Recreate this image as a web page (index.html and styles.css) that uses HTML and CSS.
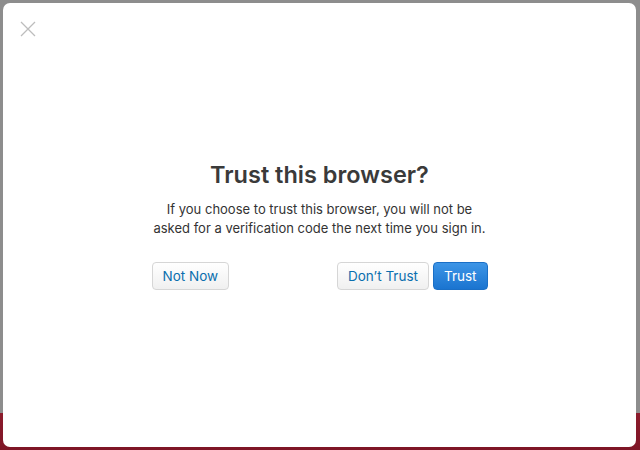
FILE: index.html
```html
<!DOCTYPE html>
<html lang="en">
<head>
<meta charset="utf-8">
<title>Trust this browser?</title>
<link rel="stylesheet" href="styles.css">
</head>
<body>
<div class="modal">
  <button class="close" aria-label="Close">
    <svg width="16" height="16" viewBox="0 0 16 16"><path d="M1 1L15 15M15 1L1 15" stroke="#bdbdbd" stroke-width="1.3" fill="none"/></svg>
  </button>
  <div class="content">
    <h1 class="title">Trust this browser?</h1>
    <p class="desc">If you choose to trust this browser, you will not be<br>asked for a verification code the next time you sign in.</p>
    <div class="actions">
      <button class="btn">Not Now</button>
      <div class="right">
        <button class="btn">Don’t Trust</button>
        <button class="btn primary">Trust</button>
      </div>
    </div>
  </div>
</div>
</body>
</html>
```
FILE: styles.css
```css
html, body { margin: 0; height: 100%; }
body {
  background: linear-gradient(to bottom, #8d8d8d 0, #8d8d8d 413px, #8c1c2c 413px, #7e1526 100%);
  font-family: Inter, "Noto Sans", sans-serif;
  padding: 3px 4px 3px 3px;
  box-sizing: border-box;
}
.modal {
  position: relative;
  background: #fff;
  border-radius: 7px;
  height: 444px;
  display: flex;
  justify-content: center;
}
.close {
  position: absolute;
  left: 17px;
  top: 18px;
  border: 0;
  background: none;
  padding: 0;
  width: 16px;
  height: 16px;
}
.close svg { display: block; }
.content {
  width: 336px;
  padding-top: 156px;
  text-align: center;
  color: #333;
}
.title {
  margin: 0;
  font-size: 23.5px;
  font-weight: 600;
  line-height: 32px;
  color: #3a3a3a;
}
.desc {
  margin: 9px -20px 0;
  font-size: 13px;
  line-height: 19px;
  color: #333;
  white-space: nowrap;
}
.actions {
  margin-top: 24px;
  display: flex;
  justify-content: space-between;
}
.right { display: flex; gap: 4px; }
.btn {
  font-family: inherit;
  font-size: 13.5px;
  height: 28px;
  padding: 0 10px;
  border: 1px solid #d6d6d6;
  border-radius: 4px;
  background: linear-gradient(#ffffff, #f0f0f0);
  color: #0b6fae;
  cursor: pointer;
}
.btn.primary {
  background: linear-gradient(#3d95e6, #1a74d0);
  border-color: #1a6fc6;
  color: #fff;
}
```
